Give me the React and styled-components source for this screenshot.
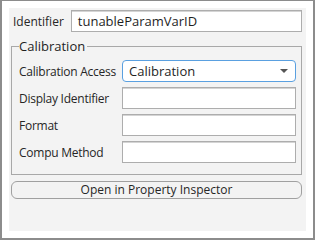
import React from "react";
import styled, { createGlobalStyle } from "styled-components";

const Global = createGlobalStyle`
  html, body { margin: 0; padding: 0; background: #fff; }
  body { font-family: "Open Sans", "Noto Sans", sans-serif; font-size: 12px; color: #262626; }
`;

const Frame = styled.div`
  box-sizing: border-box;
  width: 315px;
  height: 240px;
  border: 2px solid #8c8c8c;
  border-top-width: 1px;
  background: #fff;
  padding: 7px;
`;

const Panel = styled.div`
  height: 100%;
  background: #f3f3f3;
  padding: 2px 4px 0 2px;
  box-sizing: border-box;
  display: flex;
  flex-direction: column;
`;

const TopRow = styled.div`
  display: flex;
  align-items: center;
  gap: 7px;
  padding-left: 2px;
  height: 22px;
`;

const Label = styled.span`
  white-space: nowrap;
  width: ${(p) => p.$w || "auto"};
  letter-spacing: ${(p) => (p.$w ? "-0.25px" : "0")};
  flex: none;
`;

const Input = styled.div`
  box-sizing: border-box;
  flex: 1;
  height: 22px;
  background: #fff;
  border: 1px solid #adadad;
  box-shadow: inset 0 1px 0 #d4d4d4;
  padding: 0 6px;
  display: flex;
  align-items: center;
  font-size: 13px;
  color: #1f1f1f;
`;

const Group = styled.fieldset`
  margin: 7px 0 0 0;
  padding: 7px 5px 11px 7px;
  border: 1px solid #a8a8a8;
  border-radius: 0;
  display: flex;
  flex-direction: column;
  gap: 5px;
  legend {
    padding: 0 2px 0 0;
    margin-left: 0;
    font-size: 13px;
    line-height: 14px;
    color: #1f1f1f;
  }
`;

const Row = styled.div`
  display: flex;
  align-items: center;
  height: 22px;
`;

const Select = styled.div`
  box-sizing: border-box;
  flex: 1;
  height: 22px;
  background: #fff;
  border: 1px solid #5aa0e0;
  border-radius: 4px;
  padding: 0 6px;
  display: flex;
  align-items: center;
  justify-content: space-between;
  font-size: 13px;
  color: #1f1f1f;
`;

const Caret = styled.span`
  width: 0;
  height: 0;
  border-left: 4px solid transparent;
  border-right: 4px solid transparent;
  border-top: 4px solid #555;
  margin-right: 1px;
`;

const Button = styled.button`
  margin-top: 6px;
  height: 18px;
  box-sizing: border-box;
  border: 1px solid #a0a0a0;
  border-radius: 6px;
  background: #f3f3f3;
  font-family: inherit;
  font-size: 12px;
  color: #262626;
  padding: 0;
  line-height: 16px;
`;

export default function App() {
  const fields = ["Display Identifier", "Format", "Compu Method"];
  return (
    <>
      <Global />
      <Frame>
        <Panel>
          <TopRow>
            <Label>Identifier</Label>
            <Input>tunableParamVarID</Input>
          </TopRow>
          <Group>
            <legend>Calibration</legend>
            <Row>
              <Label $w="103px">Calibration Access</Label>
              <Select>
                Calibration
                <Caret />
              </Select>
            </Row>
            {fields.map((f) => (
              <Row key={f}>
                <Label $w="103px">{f}</Label>
                <Input />
              </Row>
            ))}
          </Group>
          <Button>Open in Property Inspector</Button>
        </Panel>
      </Frame>
    </>
  );
}
